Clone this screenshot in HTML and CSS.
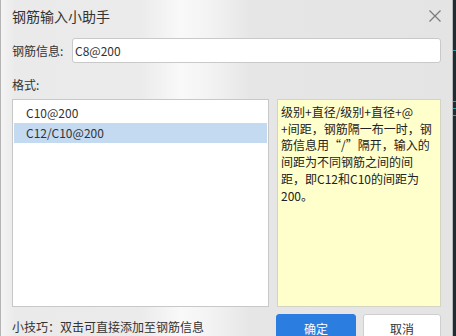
FILE: index.html
```html
<!DOCTYPE html>
<html lang="zh-CN">
<head>
    <meta charset="UTF-8">
    <title>钢筋输入小助手</title>
    <link rel="stylesheet" href="styles.css">
</head>
<body>
    <div class="dialog">
        <div class="title-bar">
            <span class="title">钢筋输入小助手</span>
            <svg class="close" width="12" height="12" viewBox="0 0 12 12">
                <path d="M0.5 0.5 L11.5 11.5 M11.5 0.5 L0.5 11.5" stroke="#7a7a7a" stroke-width="1.2" fill="none"/>
            </svg>
        </div>
        <div class="info-row">
            <label class="info-label">钢筋信息:</label>
            <input class="info-input" type="text" value="C8@200">
        </div>
        <div class="format-label">格式:</div>
        <div class="panes">
            <ul class="format-list">
                <li>C10@200</li>
                <li class="selected">C12/C10@200</li>
            </ul>
            <div class="tip-box">级别+直径/级别+直径+@<br>+间距，钢筋隔一布一时，钢<br>筋信息用“/”隔开，输入的<br>间距为不同钢筋之间的间<br>距，即C12和C10的间距为<br>200。</div>
        </div>
        <div class="footer">
            <span class="hint">小技巧：双击可直接添加至钢筋信息</span>
            <div class="buttons">
                <button class="btn btn-ok">确定</button>
                <button class="btn btn-cancel">取消</button>
            </div>
        </div>
    </div>
    <div class="edge">
        <span class="mark m1"></span>
        <span class="mark m2"></span>
        <span class="mark m3"></span>
        <span class="mark m4"></span>
    </div>
</body>
</html>
```

FILE: styles.css
```css
body {
    margin: 0;
    padding: 0;
    background-color: #26343a;
    font-family: "Noto Sans CJK SC", "Noto Sans", sans-serif;
    font-size: 12px;
    color: #333;
    display: flex;
    height: 336px;
    overflow: hidden;
}
.dialog {
    width: 453px;
    height: 350px;
    box-sizing: border-box;
    border-left: 1px solid #b4b4b4;
    border-right: 1px solid #b8b8b8;
    padding: 0 11px;
    background: linear-gradient(to right, #f4f4f4 0, #eaeaea 14px, #ebebeb 140px, #f9f9f9 180px, #f4f4f4 205px, #e6e6e6 250px, #e4e4e4 100%);
}
.edge {
    flex: 1;
    display: flex;
    flex-direction: column;
    background-color: #1f2d33;
}
.mark {
    display: block;
    height: 1px;
    background-color: #2aa3b0;
}
.m1 { margin-top: 50px; }
.m2 { margin-top: 50px; }
.m3 { margin-top: 6px; }
.m4 { margin-top: 6px; }

.title-bar {
    height: 32px;
    display: flex;
    align-items: center;
    justify-content: space-between;
}
.title {
    font-size: 14px;
    color: #333;
    line-height: 20px;
}
.info-row {
    margin-top: 6px;
    display: flex;
    align-items: center;
    height: 25px;
}
.info-label {
    width: 60px;
    line-height: 20px;
}
.info-input {
    flex: 1;
    height: 25px;
    box-sizing: border-box;
    border: 1px solid #c9c9c9;
    border-radius: 3px;
    padding: 0 2px;
    font-family: inherit;
    font-size: 12px;
    color: #333;
    background-color: #fff;
    outline: none;
}
.format-label {
    margin-top: 12px;
    line-height: 20px;
    margin-bottom: 4px;
}
.panes {
    display: flex;
    gap: 8px;
    height: 208px;
}
.format-list {
    width: 257px;
    box-sizing: border-box;
    margin: 0;
    padding: 3px 1px;
    list-style: none;
    border: 1px solid #c8c8c8;
    background-color: #fff;
}
.format-list li {
    height: 20px;
    line-height: 20px;
    padding-left: 12px;
    font-size: 12px;
    color: #333;
}
.format-list li.selected {
    background-color: #c4daf1;
}
.tip-box {
    flex: 1;
    box-sizing: border-box;
    border: 1px solid #d4d4c4;
    background-color: #ffffcc;
    padding: 4px 3px;
    line-height: 16.7px;
    font-size: 12px;
    color: #222;
    white-space: nowrap;
}
.footer {
    margin-top: 7px;
    display: flex;
    justify-content: space-between;
    align-items: flex-start;
}
.hint {
    line-height: 20px;
    margin-top: 3px;
}
.buttons {
    display: flex;
    gap: 7px;
}
.btn {
    height: 28px;
    border-radius: 3px;
    font-family: inherit;
    font-size: 12px;
    padding: 0;
    box-sizing: border-box;
}
.btn-ok {
    width: 80px;
    background-color: #2b7ee0;
    border: 1px solid #2b7ee0;
    color: #fff;
}
.btn-cancel {
    width: 78px;
    background-color: #fff;
    border: 1px solid #cfcfcf;
    color: #333;
}
```
